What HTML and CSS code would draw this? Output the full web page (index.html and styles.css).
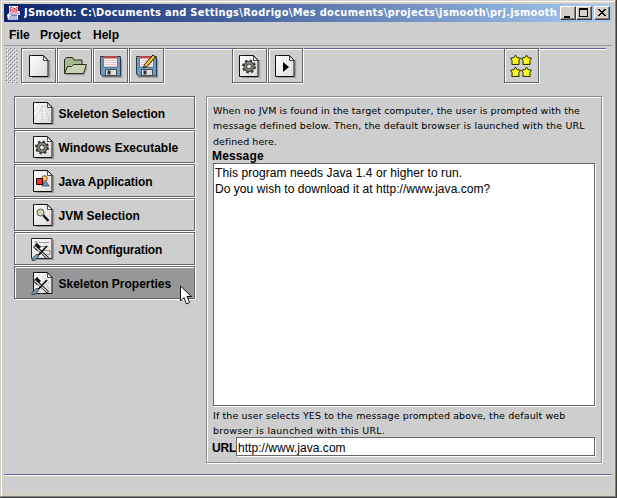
FILE: index.html
```
<!DOCTYPE html>
<html lang="en">
<head>
<meta charset="utf-8">
<title>JSmooth</title>
<link rel="stylesheet" href="styles.css">
</head>
<body>
<svg class="defs" width="0" height="0">
  <defs>
    <linearGradient id="paper" x1="0" y1="0" x2="1" y2="1"><stop offset="0" stop-color="#fff"/><stop offset="1" stop-color="#dcdad8"/></linearGradient>
    <symbol id="page" viewBox="0 0 24 24">
      <path d="M4 23.500h17.500V6" fill="none" stroke="#999" stroke-width="1.400"/>
      <path d="M3.500 1.500h12l4.500 4.500v16.500H1.500V1.500z" fill="url(#paper)" stroke="#111"/>
      <path d="M15.500 2v4.500h4.500z" fill="#fff" stroke="#222" stroke-width=".8"/>
    </symbol>
    <symbol id="gear" viewBox="0 0 24 24">
      <circle cx="11" cy="12.500" r="5.800" fill="none" stroke="#333" stroke-width="2.400" stroke-dasharray="2.300 2.250"/>
      <circle cx="11" cy="12.500" r="3.800" fill="#ddd" stroke="#333" stroke-width="3.600"/>
      <circle cx="11" cy="12.500" r="3.700" fill="none" stroke="#85857d" stroke-width="2"/>
      <circle cx="11" cy="12.500" r="1.200" fill="#eee"/>
    </symbol>
    <symbol id="disk" viewBox="0 0 24 24">
      <path d="M3 23h19.500V5" fill="none" stroke="#999" stroke-width="1.400"/>
      <path d="M1.500 2.500h20v19.500h-18l-2-2z" fill="#6d9ac0" stroke="#26384a"/>
      <path d="M4.500 2.500h14v10.500h-14z" fill="#f8f5f3" stroke="#445" stroke-width=".6"/>
      <path d="M5 3.500h13" stroke="#d13f3f" stroke-width="2"/>
      <path d="M5.500 6.500h12M5.500 8.500h12M5.500 10.500h12" stroke="#e2b9b6" stroke-width=".8"/>
      <path d="M6.500 15.500h11v6h-11z" fill="#ddd" stroke="#333" stroke-width=".8"/>
      <path d="M8.500 16.500h3v4h-3z" fill="#333"/>
    </symbol>
    <symbol id="tools" viewBox="0 0 24 24">
      <path d="M3 9l3 3 2-2-3-3M6 11l11 10.500" fill="none" stroke="#111" stroke-width="2.800"/>
      <path d="M3.500 9.500l3 2.500 10 9" fill="none" stroke="#e8e8e8" stroke-width="1.100"/>
      <path d="M16 9L7 18.500" stroke="#111" stroke-width="1.800"/>
      <path d="M6 17l2 2-4 4.500H1V21.500z" fill="#7795ad" stroke="#26384a" stroke-width=".8"/>
    </symbol>
    <symbol id="star" viewBox="0 0 10 10">
      <path d="M5 .5l1.300 2.300 3.200.6-1.500 2.400.3 3.200H1.700l.3-3.200L.5 3.400l3.200-.6z" fill="#ffff20" stroke="#222200" stroke-width=".9"/>
    </symbol>
  </defs>
</svg>
<div class="window">
  <header class="titlebar">
    <svg class="logo" viewBox="0 0 16 16"><path d="M3 1h9v5h2v4h-2v5H2l-1-5 2-2z" fill="#fff"/><path d="M4 3q1-2 3 0t4-1v5H4zM4 5h7" fill="#fbd5d8" stroke="#d83b4b"/><path d="M3 9h9l2-2M3 12h8M2 14h11M5 10.500h6" fill="none" stroke="#6f72bd"/></svg>
    <span class="title">JSmooth: C:\Documents and Settings\Rodrigo\Mes documents\projects\jsmooth\prj.jsmooth</span>
    <div class="controls">
      <button class="ctl"><svg viewBox="0 0 16 14"><path d="M4 10h6v2H4z"/></svg></button>
      <button class="ctl"><svg viewBox="0 0 16 14"><path d="M3 2h9v9H3zM4 4v6h7V4z" fill-rule="evenodd"/></svg></button>
      <button class="ctl close"><svg viewBox="0 0 16 14"><path d="M4 3l7 7M5 3l7 7M11 3l-7 7M12 3l-7 7" stroke="#000" stroke-width="1"/></svg></button>
    </div>
  </header>
  <nav class="menubar"><span class="m-file">File</span><span class="m-project">Project</span><span class="m-help">Help</span></nav>
  <div class="toolbar">
    <svg class="grip" width="11" height="36"><defs><pattern id="dots" width="4" height="4" patternUnits="userSpaceOnUse"><path d="M0 0h1v1H0zM2 2h1v1H2z" fill="#777"/><path d="M1 1h1v1H1zM3 3h1v1H3z" fill="#fff"/></pattern></defs><rect width="11" height="36" fill="url(#dots)"/></svg>
    <button class="tool"><svg viewBox="0 0 24 24"><use href="#page" x="1" y="0" width="24" height="24"/></svg></button>
    <button class="tool"><svg viewBox="0 0 24 24"><path d="M3 20.500h18l3-8" fill="none" stroke="#999" stroke-width="1.500"/><path d="M1.500 19.500V5.500l2-2h6l1.500 2.500h8v6" fill="#a6b68e" stroke="#222b1a"/><path d="M1.500 19.500l3-7h4l2-2h13l-3 9z" fill="#c8d3b4" stroke="#29331f"/></svg></button>
    <button class="tool"><svg viewBox="0 0 24 24"><use href="#disk"/></svg></button>
    <button class="tool"><svg viewBox="0 0 24 24"><use href="#disk"/><path d="M8.500 13.500l1-3L18 1l2.500 2L12 12.500z" fill="#f8c22f" stroke="#111"/></svg></button>
    <div class="rule r1"></div>
    <button class="tool"><svg viewBox="0 0 24 24"><use href="#page"/><use href="#gear"/></svg></button>
    <button class="tool"><svg viewBox="0 0 24 24"><use href="#page"/><path d="M9 8v10l6-5z"/></svg></button>
    <div class="rule r2"></div>
    <button class="tool"><svg viewBox="0 0 24 24"><use href="#star" x="0" y="0.500" width="11" height="11"/><use href="#star" x="11" y="0.500" width="11" height="11"/><use href="#star" x="0" y="12.500" width="11" height="11"/><use href="#star" x="11" y="12.500" width="11" height="11"/></svg></button>
    <div class="rule r3"></div>
  </div>
  <main class="main">
    <aside class="side">
      <button class="item"><svg viewBox="0 0 24 24"><use href="#page" x="1" y="0" width="24" height="24"/><path d="M12 4L4 18M11 5v16M13 5l6 15M8 4L3 11M15 5l5 7" stroke="#999" stroke-width=".8" stroke-dasharray="1 1.500"/></svg><span class="n1">Skeleton Selection</span></button>
      <button class="item"><svg viewBox="0 0 24 24"><use href="#page" x="1" y="0" width="24" height="24"/><use href="#gear" x="0" y="0" width="24" height="24"/></svg><span class="n2">Windows Executable</span></button>
      <button class="item"><svg viewBox="0 0 24 24"><use href="#page" x="1" y="0" width="24" height="24"/><path d="M11 17l3-6 4 6z" fill="#7899bb" stroke="#345" stroke-width=".8"/><circle cx="13.500" cy="9.500" r="2.800" fill="#f3c55b" stroke="#753"/><path d="M5.500 9.500h6v6h-6z" fill="#e33a1d" stroke="#300"/></svg><span class="n3">Java Application</span></button>
      <button class="item"><svg viewBox="0 0 24 24"><use href="#page" x="1" y="0" width="24" height="24"/><path d="M12 12l5.500 6" stroke="#111" stroke-width="2.500"/><circle cx="9.500" cy="9.500" r="3.500" fill="#d2d5b4" stroke="#555"/></svg><span class="n4">JVM Selection</span></button>
      <button class="item"><svg viewBox="0 0 24 24"><path d="M2.500 22.500h20V3" fill="none" stroke="#999"/><path d="M.5 1.500h20.500v20H.5z" fill="url(#paper)" stroke="#222"/><path d="M4 4.500h2v2H4zM8 5.500h10M4 9.500h2M8 9.500h9M12 13.500h7v4h-5" fill="none" stroke="#999"/><use href="#tools"/></svg><span class="n5">JVM Configuration</span></button>
      <button class="item active"><svg viewBox="0 0 24 24"><use href="#page" x="1" y="0" width="24" height="24"/><path d="M12 5l6 14M8 4L5 9M16 9l3 4" stroke="#999" stroke-dasharray="1 1.500"/><use href="#tools"/></svg><span class="n6">Skeleton Properties</span></button>
      <svg class="cursor" viewBox="0 0 12 21"><path d="M.5 1v15l3.500-3.500 2.500 6.500 3-1.500L7 11.500h4.500z" fill="#fff" stroke="#111"/></svg>
    </aside>
    <section class="panel">
      <p class="hint h1"><span class="l1">When no JVM is found in the target computer, the user is prompted with the</span><span class="l2">message defined below. Then, the default browser is launched with the URL</span><span class="l3">defined here.</span></p>
      <div class="label">Message</div>
      <div class="area"><div class="a1">This program needs Java 1.4 or higher to run.</div><div class="a2">Do you wish to download it at http://www.java.com?</div></div>
      <p class="hint h2"><span class="l4">If the user selects YES to the message prompted above, the default web</span><span class="l5">browser is launched with this URL.</span></p>
      <div class="urlrow"><span class="urllabel">URL</span><div class="field"><span class="u1">http://www.java.com</span></div></div>
    </section>
  </main>
  <footer class="status"></footer>
</div>
</body>
</html>
```
FILE: styles.css
```
* { box-sizing: border-box; }
body { margin: 0; width: 617px; height: 498px; overflow: hidden; background: #404040; font-family: "Liberation Sans", sans-serif; color: #000; }
.defs { position: absolute; }
span { white-space: nowrap; }
button { padding: 0; border: 0; background: none; font: inherit; color: inherit; }
.window { width: 616px; height: 497px; border: 1px solid #808080; border-top-color: #d4d0c8; border-left-color: #d4d0c8; background: #d4d0c8; box-shadow: inset 1px 1px 0 #fff; display: flex; flex-direction: column; padding: 3px; }
.titlebar { height: 18px; flex: none; display: flex; align-items: center; background: linear-gradient(90deg, #0a246a, #a6caf0); }
.logo { width: 16px; height: 16px; margin: 0 2px 0 2px; flex: none; }
.title { flex: 1; overflow: hidden; font: bold 11px "DejaVu Sans Condensed", "DejaVu Sans", sans-serif; letter-spacing: .28px; color: #fff; line-height: 18px; }
.controls { display: flex; margin-right: 2px; }
.ctl { width: 16px; height: 14px; background: #d4d0c8; border: 1px solid; border-color: #fff #404040 #404040 #fff; box-shadow: inset -1px -1px 0 #808080; }
.ctl svg { display: block; width: 16px; height: 14px; margin: -1px; }
.close { margin-left: 2px; }
.menubar { height: 24px; flex: none; background: #cecece; border-bottom: 1px solid #999; font-size: 12px; font-weight: bold; line-height: 26px; display: flex; padding-left: 5px; }
.m-file { width: 31px; }
.m-project { width: 53px; }
.toolbar { height: 40px; flex: none; background: #cecece; padding: 2px 0 0 2px; display: flex; }
.grip { flex: none; margin-right: 4px; }
.tool { width: 35px; height: 35px; margin-right: 1px; border: 1px solid #666; box-shadow: 1px 1px 0 #fff, inset 1px 1px 0 #fff; flex: none; }
.tool svg { display: block; width: 24px; height: 24px; margin: 5px; }
.rule { height: 2px; border-top: 1px solid #6262a0; border-bottom: 1px solid #fff; }
.r1 { width: 67px; }
.r2 { width: 200px; }
.r3 { width: 66px; }
.main { flex: 1; min-height: 0; background: #cecece; display: flex; gap: 11px; padding: 10px 10px 11px 10px; }
.side { width: 181px; flex: none; display: flex; flex-direction: column; gap: 1px; position: relative; }
.item { height: 33px; border: 1px solid #666; box-shadow: 1px 1px 0 #fff, inset 1px 1px 0 #fff; display: flex; align-items: center; padding-left: 16px; font-size: 12px; font-weight: bold; }
.item svg { width: 24px; height: 24px; margin-right: 3.5px; }
.item span { padding-top: 2px; }
.n2 { letter-spacing: .03px; }
.n3 { letter-spacing: -.05px; }
.n5 { letter-spacing: -.18px; }
.active { background: #999699; }
.cursor { position: absolute; left: 166px; top: 189px; width: 12px; height: 21px; }
.panel { flex: 1; border: 1px solid #8e8e8e; box-shadow: 1px 1px 0 #fff, inset 1px 1px 0 #fff; padding: 6px; display: flex; flex-direction: column; }
.hint { margin: 0; font: 9.5px "DejaVu Sans", sans-serif; letter-spacing: .07px; }
.hint span { display: block; line-height: 15px; }
.h1 { height: 46px; padding-top: 1px; }
.h2 { height: 31px; padding-top: 2px; }
.hint .l1 { line-height: 14px; }
.hint .l2 { letter-spacing: .14px; }
.hint .l3 { line-height: 17px; }
.hint .l4 { letter-spacing: .11px; }
.hint .l5 { letter-spacing: .25px; line-height: 16px; }
.label { font-size: 12px; font-weight: bold; line-height: 14px; height: 14px; margin-left: -1px; letter-spacing: .15px; }
.area { height: 243px; border: 1px solid #666; box-shadow: 1px 1px 0 #fff; background: #fff; font-size: 12px; line-height: 16px; padding: 1px 0 0 1px; }
.a1 { letter-spacing: .08px; }
.a2 { letter-spacing: .05px; }
.urlrow { display: flex; height: 19px; }
.urllabel { width: 24px; margin-left: -1px; font-size: 12px; font-weight: bold; line-height: 22px; letter-spacing: -.2px; }
.field { flex: 1; background: #fff; border: 1px solid #666; box-shadow: 1px 1px 0 #fff; font-size: 12px; line-height: 20px; padding-left: 1px; letter-spacing: .05px; }
.status { flex: none; height: 19px; background: #cecece; border-top: 1px solid #6262a0; box-shadow: inset 0 1px 0 #fff; }
```
